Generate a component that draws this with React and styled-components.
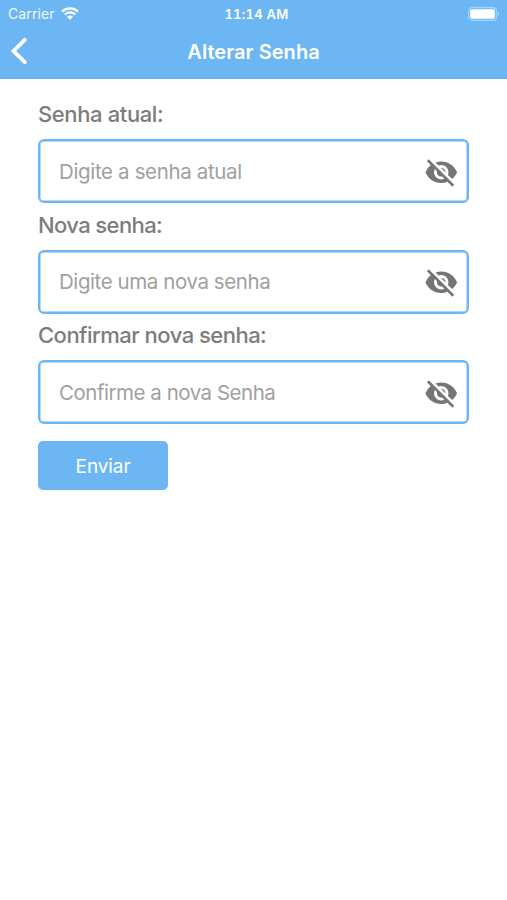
import React from 'react';
import styled, { createGlobalStyle } from 'styled-components';
import { MdVisibilityOff } from 'react-icons/md';

const blue = '#6cb6f3';

const GlobalStyle = createGlobalStyle`
  * {
    box-sizing: border-box;
  }

  body {
    margin: 0;
    background: #fff;
    font-family: Inter, "Liberation Sans", sans-serif;
  }
`;

const Screen = styled.div`
  min-height: 100vh;
  background: #fff;
`;

const Header = styled.header`
  height: 79px;
  background: ${blue};
  border-bottom: 1px solid #68aee7;
  color: #fff;
`;

const StatusBar = styled.div`
  display: grid;
  grid-template-columns: 1fr auto 1fr;
  align-items: center;
  height: 27px;
  padding: 0 7px 0 8px;
`;

const Carrier = styled.div`
  display: flex;
  align-items: center;
  gap: 6px;
  font-size: 14px;
  letter-spacing: 0.1px;
  color: #f0f8fe;
`;

const Clock = styled.div`
  padding-left: 5px;
  font-size: 13px;
  font-weight: 600;
  font-variant-numeric: tabular-nums;
  letter-spacing: 0.25px;
`;

const Battery = styled.svg`
  justify-self: end;
`;

const NavBar = styled.div`
  display: grid;
  grid-template-columns: 1fr auto 1fr;
  align-items: center;
  height: 48px;
  padding: 0 10px;
`;

const BackButton = styled.button`
  display: flex;
  width: 18px;
  padding: 0;
  border: 0;
  background: none;
`;

const Title = styled.h1`
  margin: 0;
  padding-top: 1px;
  font-size: 20px;
  font-weight: 600;
  letter-spacing: 0.05px;
`;

const Form = styled.form`
  padding: 21px 38px 0;
`;

const Field = styled.div`
  height: 110.6px;
`;

const Label = styled.label`
  display: block;
  height: 39px;
  line-height: 28px;
  font-size: 22px;
  font-weight: 450;
  letter-spacing: ${({ $spacing }) => $spacing};
  color: #7c7c7c;
`;

const InputBox = styled.div`
  display: flex;
  align-items: center;
  height: 64px;
  padding: 0 9px 0 19px;
  border: 2px solid ${blue};
  border-radius: 6px;
  box-shadow: inset 0 0 0 0.5px ${blue};
  color: #757575;
`;

const Input = styled.input`
  flex: 1;
  min-width: 0;
  padding: 0;
  border: 0;
  outline: 0;
  background: none;
  font-family: inherit;
  font-size: 20.5px;
  letter-spacing: ${({ $spacing }) => $spacing};

  &::placeholder {
    color: #a0a0a0;
    opacity: 1;
  }
`;

const HiddenIcon = styled(MdVisibilityOff)`
  width: 34.5px;
  height: 34.5px;
  margin-top: 2px;
`;

const SubmitButton = styled.button`
  width: 130px;
  height: 49px;
  margin-top: 9px;
  padding: 2px 0 0;
  border: 0;
  border-radius: 5px;
  background: ${blue};
  color: #fff;
  font-family: inherit;
  font-size: 19px;
  letter-spacing: -0.1px;
`;

const fields = [
  {
    id: 'current',
    label: 'Senha atual:',
    labelSpacing: '-0.38px',
    placeholder: 'Digite a senha atual',
    inputSpacing: '-0.35px',
  },
  {
    id: 'new',
    label: 'Nova senha:',
    labelSpacing: '-0.6px',
    placeholder: 'Digite uma nova senha',
    inputSpacing: '-0.42px',
  },
  {
    id: 'confirm',
    label: 'Confirmar nova senha:',
    labelSpacing: '-0.52px',
    placeholder: 'Confirme a nova Senha',
    inputSpacing: '-0.48px',
  },
];

function PasswordField({
  id, label, labelSpacing, placeholder, inputSpacing,
}) {
  return (
    <Field>
      <Label htmlFor={id} $spacing={labelSpacing}>{label}</Label>
      <InputBox>
        <Input id={id} type="password" placeholder={placeholder} $spacing={inputSpacing} />
        <HiddenIcon />
      </InputBox>
    </Field>
  );
}

export default function App() {
  return (
    <Screen>
      <GlobalStyle />
      <Header>
        <StatusBar>
          <Carrier>
            Carrier
            <svg width="18" height="13" viewBox="0 0 18 13" fill="none" stroke="#fff" strokeWidth="2.3">
              <path d="M1 4.6C5.5 0.4 12.5 0.4 17 4.6" />
              <path d="M3.8 7.5C6.8 4.7 11.2 4.7 14.2 7.5" />
              <path d="M9 12.7L6 9.7C7.7 8.2 10.3 8.2 12 9.7Z" fill="#fff" stroke="none" />
            </svg>
          </Carrier>
          <Clock>11:14 AM</Clock>
          <Battery width="32" height="14" viewBox="0 0 32 14">
            <rect x="0.7" y="0.6" width="27.6" height="12.8" rx="3.4" fill="none" stroke="#a9d5f8" strokeWidth="1.1" />
            <rect x="2.2" y="2.2" width="24.6" height="9.6" rx="1.8" fill="#fff" />
            <path d="M29.7 4.8Q31.2 5.4 31.2 7T29.7 9.2Z" fill="#a9d5f8" />
          </Battery>
        </StatusBar>
        <NavBar>
          <BackButton type="button" aria-label="Voltar">
            <svg width="18" height="28" viewBox="0 0 18 28" fill="none" stroke="#fff" strokeWidth="3.8">
              <path d="M14.8 2.8L3.5 14L14.8 25.2" strokeLinecap="round" />
            </svg>
          </BackButton>
          <Title>Alterar Senha</Title>
        </NavBar>
      </Header>
      <Form>
        {fields.map((field) => (
          <PasswordField key={field.id} {...field} />
        ))}
        <SubmitButton type="button">Enviar</SubmitButton>
      </Form>
    </Screen>
  );
}
